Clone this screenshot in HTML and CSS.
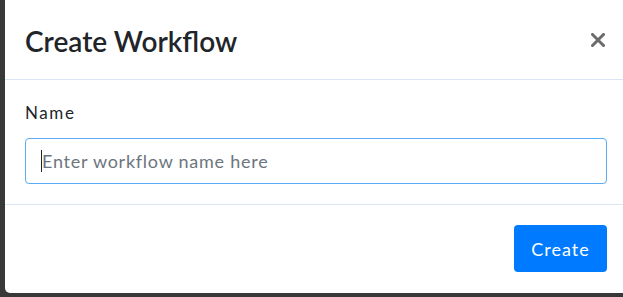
FILE: index.html
```html
<!DOCTYPE html>
<html lang="en">
<head>
    <meta charset="UTF-8">
    <meta name="viewport" content="width=device-width, initial-scale=1.0">
    <title>Create Workflow</title>
    <link rel="stylesheet" href="styles.css">
</head>
<body>
    <div class="modal">
        <div class="modal-header">
            <h2>Create Workflow</h2>
            <button class="close" aria-label="Close">
                <svg width="14" height="14" viewBox="0 0 14 14">
                    <path d="M1.5 1.5 L12.5 12.5 M12.5 1.5 L1.5 12.5" stroke="#6b6b6b" stroke-width="3" stroke-linecap="square"/>
                </svg>
            </button>
        </div>

        <div class="modal-body">
            <label for="workflowName">Name</label>
            <input type="text" id="workflowName" class="caret" placeholder="Enter workflow name here" autofocus>
        </div>

        <div class="modal-footer">
            <button class="btn-primary">Create</button>
        </div>
    </div>
</body>
</html>
```

FILE: styles.css
```css
body {
    margin: 0;
    background: #383838;
    font-family: Lato, "Open Sans", sans-serif;
    color: #212529;
    overflow: hidden;
}
.modal {
    margin-left: 5px;
    width: 622px;
    height: 293px;
    background: #fff;
    border-radius: 0 0 5px 5px;
}
.modal-header {
    display: flex;
    justify-content: space-between;
    align-items: center;
    padding: 0 22px 0 20px;
    border-bottom: 1px solid #dbe4f7;
    box-sizing: border-box;
    height: 80px;
}
.modal-header h2 {
    margin: 0;
    font-size: 28px;
    font-weight: 600;
    padding-top: 2px;
}
.close {
    border: none;
    background: none;
    padding: 0;
    display: flex;
}
.modal-body {
    padding: 21px 20px 20px;
    border-bottom: 1px solid #dbe4f7;
}
label {
    display: block;
    font-size: 17px;
    line-height: 24px;
    letter-spacing: 1.6px;
    margin-bottom: 13px;
}
input {
    display: block;
    width: 100%;
    height: 46px;
    box-sizing: border-box;
    padding: 0 15px 0 16px;
    font-family: inherit;
    font-size: 18px;
    letter-spacing: 0.75px;
    color: #212529;
    border: 1px solid #5aacf5;
    border-radius: 4px;
    outline: none;
}
/* fake text cursor, the screenshot shows it blinking at the start */
input.caret {
    background: linear-gradient(#212529, #212529) no-repeat 15px 11px / 1px 22px;
}
input::placeholder {
    color: #6c757d;
}
.modal-footer {
    display: flex;
    justify-content: flex-end;
    padding: 20px;
}
.btn-primary {
    width: 93px;
    height: 47px;
    border: none;
    border-radius: 4px;
    background: #007bff;
    color: #fff;
    font-family: inherit;
    font-size: 18px;
    letter-spacing: 1px;
    padding: 0;
}
```
